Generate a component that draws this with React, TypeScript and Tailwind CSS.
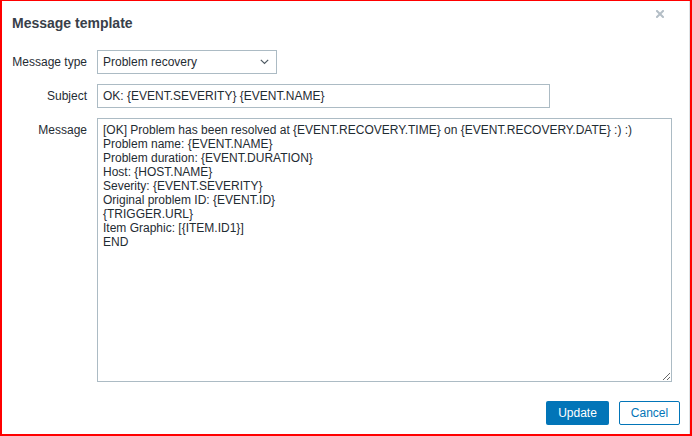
import React from "react";

const font = { fontFamily: '"Liberation Sans", Arial, sans-serif' };

const messageText = `[OK] Problem has been resolved at {EVENT.RECOVERY.TIME} on {EVENT.RECOVERY.DATE} :) :)
Problem name: {EVENT.NAME}
Problem duration: {EVENT.DURATION}
Host: {HOST.NAME}
Severity: {EVENT.SEVERITY}
Original problem ID: {EVENT.ID}
{TRIGGER.URL}
Item Graphic: [{ITEM.ID1}]
END`;

function Label({ children }: { children: React.ReactNode }) {
    return (
        <div className="w-[85px] shrink-0 text-right text-[12px] leading-[24px] text-[#1f2c33]">
            {children}
        </div>
    );
}

export default function App() {
    return (
        <div
            style={font}
            className="h-[436px] w-[692px] border-t border-r-2 border-b-2 border-l-2 border-[#ff0000] bg-white"
        >
            <div className="flex h-full flex-col border-r border-[#dfe4e7]">
                {/* Header */}
                <div className="flex items-start justify-between pt-[13px] pl-[10px] pr-[25px]">
                    <h2 className="text-[14px] font-bold leading-[18px] text-[#384049]">
                        Message template
                    </h2>
                    <svg
                        width="8"
                        height="8"
                        viewBox="0 0 8 8"
                        className="mt-[-4px]"
                    >
                        <path
                            d="M1 1 L7 7 M7 1 L1 7"
                            stroke="#b4bec6"
                            strokeWidth="2"
                            strokeLinecap="square"
                        />
                    </svg>
                </div>

                {/* Form */}
                <div className="mt-[18px] flex flex-col gap-[10px]">
                    <div className="flex items-start gap-[10px]">
                        <Label>Message type</Label>
                        <div className="flex h-[24px] w-[180px] items-center justify-between border border-[#acbbc4] pl-[5px] pr-[7px] text-[12px] text-[#1f2c33]">
                            <span>Problem recovery</span>
                            <svg width="9" height="6" viewBox="0 0 9 6">
                                <path
                                    d="M0.8 0.8 L4.5 4.5 L8.2 0.8"
                                    fill="none"
                                    stroke="#4f5a63"
                                    strokeWidth="1.2"
                                />
                            </svg>
                        </div>
                    </div>

                    <div className="flex items-start gap-[10px]">
                        <Label>Subject</Label>
                        <div className="flex h-[24px] w-[453px] items-center border border-[#acbbc4] px-[5px] text-[12px] text-[#1f2c33]">
                            OK: {"{EVENT.SEVERITY}"} {"{EVENT.NAME}"}
                        </div>
                    </div>

                    <div className="flex items-start gap-[10px]">
                        <Label>Message</Label>
                        <textarea
                            readOnly
                            defaultValue={messageText}
                            style={font}
                            className="h-[264px] w-[575px] resize border border-[#acbbc4] px-[5px] pt-[4px] text-[12px] leading-[14px] text-[#1f2c33] outline-none"
                        />
                    </div>
                </div>

                {/* Footer */}
                <div className="mt-[19px] flex justify-end gap-[10px] pr-[9px]">
                    <button className="h-[24px] w-[63px] rounded-[2px] bg-[#0275b8] text-[12px] text-white">
                        Update
                    </button>
                    <button className="h-[24px] w-[61px] rounded-[2px] border border-[#0275b8] bg-white text-[12px] text-[#0275b8]">
                        Cancel
                    </button>
                </div>
            </div>
        </div>
    );
}
